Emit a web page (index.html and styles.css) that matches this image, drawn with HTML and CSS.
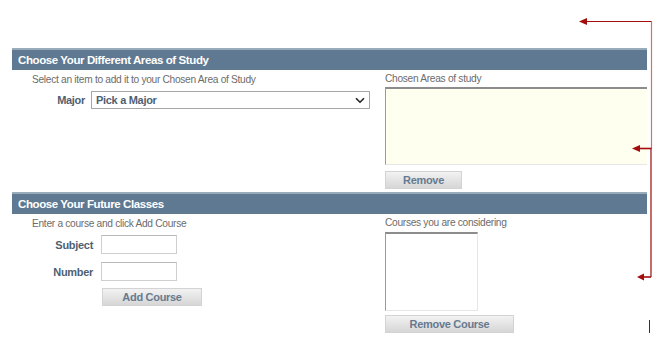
FILE: index.html
```html
<!DOCTYPE html>
<html>
<head>
    <title>Choose Your Areas of Study</title>
    <link rel="stylesheet" href="styles.css">
</head>
<body>
    <div class="planner">
        <div class="section">
            <div class="section-title">Choose Your Different Areas of Study</div>
            <div class="section-body">
                <div class="col-left">
                    <div class="hint">Select an item to add it to your Chosen Area of Study</div>
                    <div class="field-row major-row">
                        <label class="field-label">Major</label>
                        <div class="select-wrap">
                            <select id="major">
                                <option>Pick a Major</option>
                            </select>
                            <svg class="chevron" width="10" height="7" viewBox="0 0 10 7">
                                <path d="M1 1.2 L5 5.2 L9 1.2" fill="none" stroke="#222" stroke-width="1.6"/>
                            </svg>
                        </div>
                    </div>
                </div>
                <div class="col-right">
                    <div class="hint hint-right">Chosen Areas of study</div>
                    <div class="listbox listbox-areas"></div>
                    <button class="btn btn-remove">Remove</button>
                </div>
            </div>
        </div>

        <div class="section">
            <div class="section-title">Choose Your Future Classes</div>
            <div class="section-body">
                <div class="col-left">
                    <div class="hint">Enter a course and click Add Course</div>
                    <div class="field-row subject-row">
                        <label class="field-label">Subject</label>
                        <input type="text" id="subject">
                    </div>
                    <div class="field-row number-row">
                        <label class="field-label">Number</label>
                        <input type="text" id="number">
                    </div>
                    <button class="btn btn-add">Add Course</button>
                </div>
                <div class="col-right">
                    <div class="hint hint-right">Courses you are considering</div>
                    <div class="listbox listbox-courses"></div>
                    <button class="btn btn-remove-course">Remove Course</button>
                </div>
            </div>
        </div>
    </div>

    <!-- annotation arrows drawn over the form -->
    <svg class="arrows" width="657" height="338" viewBox="0 0 657 338">
        <path d="M651.5 21.5 V148" stroke="#c97373" stroke-width="1.2" fill="none"/>
        <path d="M651 148 V277" stroke="#9b0b0b" stroke-width="1.2" fill="none"/>
        <path d="M651.5 21.5 H584" stroke="#a30d0d" stroke-width="1.2" fill="none"/>
        <path d="M579 21.5 L587 18 L587 25 Z" fill="#a30d0d"/>
        <path d="M651.5 148.5 H638" stroke="#a30d0d" stroke-width="1.6" fill="none"/>
        <path d="M632 148.5 L640 145 L640 152 Z" fill="#a30d0d"/>
        <path d="M651 277 H642" stroke="#a30d0d" stroke-width="1.6" fill="none"/>
        <path d="M637 277 L644 273.5 L644 280.5 Z" fill="#a30d0d"/>
        <path d="M649.5 320 V333" stroke="#333" stroke-width="1" fill="none"/>
    </svg>
</body>
</html>
```

FILE: styles.css
```css
body {
    margin: 0;
    background: white;
    font-family: "Liberation Sans", Arial, sans-serif;
    font-size: 11px;
}
.planner {
    width: 635px;
    margin-left: 12px;
    padding-top: 48px;
}
.section-title {
    height: 20px;
    line-height: 21px;
    border-top: 2px solid #97abbb;
    background: #5e7991;
    color: white;
    font-weight: bold;
    font-size: 11.5px;
    letter-spacing: -0.4px;
    padding-left: 6px;
}
.section-body {
    display: grid;
    grid-template-columns: 373px 262px;
}
.hint {
    color: #6c6c6c;
    font-size: 10.2px;
    letter-spacing: -0.3px;
    line-height: 13px;
    margin-top: 3px;
    padding-left: 20px;
}
.hint-right {
    padding-left: 0;
    margin-top: 2px;
}
.field-row {
    display: flex;
    align-items: center;
}
.field-label {
    box-sizing: border-box;
    text-align: right;
    font-weight: bold;
    color: #4f5f72;
    font-size: 11px;
    letter-spacing: -0.3px;
}
.major-row {
    margin-top: 5px;
}
.major-row .field-label {
    width: 79px;
    padding-right: 6px;
}
.select-wrap {
    position: relative;
}
select {
    appearance: none;
    display: block;
    width: 279px;
    height: 18px;
    border: 1px solid #a7a7a7;
    background: white;
    font-family: "Liberation Sans", Arial, sans-serif;
    font-size: 11px;
    letter-spacing: -0.3px;
    font-weight: bold;
    color: #4f5f72;
    padding: 0 4px;
    border-radius: 0;
}
.chevron {
    position: absolute;
    right: 5px;
    top: 6px;
}
.subject-row {
    margin-top: 5px;
}
.number-row {
    margin-top: 8px;
}
.subject-row .field-label,
.number-row .field-label {
    width: 89px;
    padding-right: 8px;
}
input {
    display: block;
    width: 74px;
    height: 17px;
    padding: 0;
    border: 1px solid #cfcfcf;
    border-top-color: #b9b9b9;
    background: white;
}
.listbox {
    border: 1px solid #e6e6e6;
    border-top: 2px solid #8c8c8c;
    border-left: 1px solid #9a9a9a;
}
.listbox-areas {
    height: 75px;
    margin-top: 2px;
    background: #fffff0;
    border-right: none;
}
.listbox-courses {
    width: 91px;
    height: 76px;
    margin-top: 3px;
    background: white;
}
.btn {
    display: block;
    height: 18px;
    padding: 0;
    border: 1px solid #d3d3d3;
    background: linear-gradient(#f2f2f2, #d6d6d6);
    color: #667a8f;
    font-family: "Liberation Sans", Arial, sans-serif;
    font-weight: bold;
    font-size: 11px;
    letter-spacing: -0.3px;
}
.btn-remove {
    width: 77px;
    margin-top: 6px;
    margin-bottom: 3px;
}
.btn-add {
    width: 100px;
    margin-top: 7px;
    margin-left: 90px;
}
.btn-remove-course {
    width: 129px;
    margin-top: 4px;
}
.arrows {
    position: absolute;
    left: 0;
    top: 0;
    pointer-events: none;
}
```
